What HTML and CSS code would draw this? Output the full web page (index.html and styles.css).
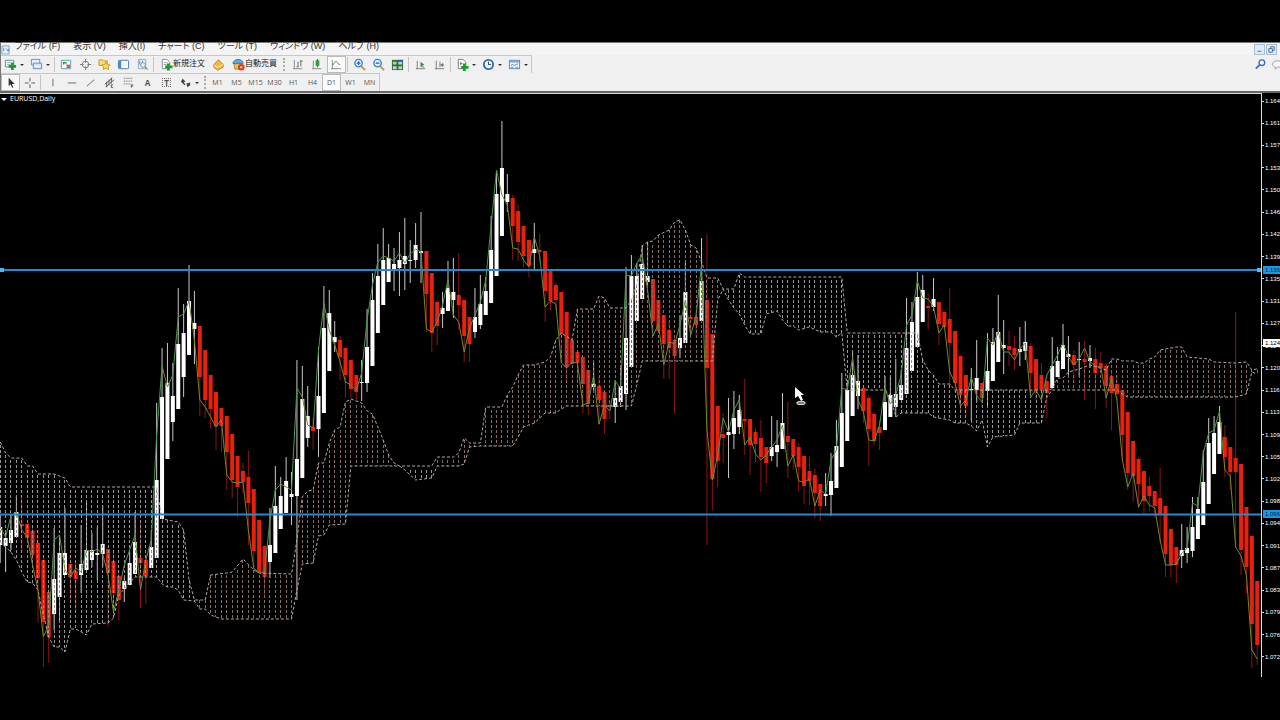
FILE: index.html
```
<!DOCTYPE html>
<html lang="ja">
<head>
    <meta charset="UTF-8" />
    <meta name="viewport" content="width=device-width, initial-scale=1.0"/>
    <title>EURUSD,Daily</title>
    <link rel="stylesheet" href="styles.css">
</head>
<body>
    <header class="toolbars">
        <nav class="menubar">
            <svg class="app-icon" viewBox="0 0 10 12"><path d="M1 2h8v9h-8z" fill="#e4f0fa" stroke="#7ba3c8"/><path d="M3 4v4M6 5l2 3 1-3" stroke="#4d86bd" fill="none"/></svg>
            <button class="menu">ファイル (F)</button>
            <button class="menu">表示 (V)</button>
            <button class="menu">挿入(I)</button>
            <button class="menu">チャート (C)</button>
            <button class="menu">ツール (T)</button>
            <button class="menu">ウィンドウ (W)</button>
            <button class="menu">ヘルプ (H)</button>
            <div class="window-controls">
                <button class="win" aria-label="最小化"><svg viewBox="0 0 10 10"><path d="M3 7h4" stroke="#4a6a8c"/></svg></button>
                <button class="win" aria-label="元に戻す"><svg viewBox="0 0 10 10"><path d="M4 4v-2h4v4h-2M2 4h4v4h-4z" fill="none" stroke="#4a6a8c"/></svg></button>
            </div>
        </nav>

        <div class="row">
            <div class="bar bar-main">
                <button class="tool" aria-label="新規チャート"><svg viewBox="0 0 14 14"><path d="M1.5 2.5h9v7h-9z" fill="#fff" stroke="#5f8a8f"/><path d="M3 5h6M3 7h4" stroke="#8fb6bb"/><path d="M9 5v8M5 9h8" stroke="#15a02c" stroke-width="3"/></svg></button>
                <button class="caret" aria-label="チャート一覧"></button>
                <button class="tool" aria-label="プロファイル"><svg viewBox="0 0 14 14"><path d="M1.5 1.5h9v6h-9z" fill="#e3effa" stroke="#5b8fc0"/><path d="M3.500 5.500h9v6h-9z" fill="#cfe3f5" stroke="#5b8fc0"/><path d="M5 9h6" stroke="#fff"/></svg></button>
                <button class="caret" aria-label="プロファイル一覧"></button>
                <span class="sep"></span>
                <button class="tool" aria-label="気配値"><svg viewBox="0 0 14 14"><path d="M1.500 2.500h10v9h-10z" fill="#f7fbff" stroke="#5c9fb8"/><path d="M3 5h3l1 1M4 4v3" stroke="#20a03a" stroke-width="1.500" fill="none"/><path d="M7 7l3 3M10 7v3h-3" stroke="#e0563a" stroke-width="1.500" fill="none"/></svg></button>
                <button class="tool" aria-label="データウィンドウ"><svg viewBox="0 0 14 14"><circle cx="7" cy="7" r="3.500" fill="none" stroke="#777"/><path d="M7 1v4M7 9v4M1 7h4M9 7h4" stroke="#777"/></svg></button>
                <button class="tool" aria-label="ナビゲーター"><svg viewBox="0 0 14 14"><path d="M1 2h4l1 1h4v5h-9z" fill="#f8dc79" stroke="#c79b2b"/><path d="M8.500 4l1.500 3 3 .5-2 2 .5 3-3-1.500-3 1.500.5-3-2-2 3-.5z" fill="#ffd84f" stroke="#c79b2b"/></svg></button>
                <button class="tool" aria-label="ターミナル"><svg viewBox="0 0 14 14"><rect x="1.500" y="2.500" width="11" height="9" rx="1" fill="#f5faff" stroke="#3f77ad"/><path d="M2 3h2.500v8h-2.500z" fill="#4d87be"/></svg></button>
                <button class="tool" aria-label="ストラテジーテスター"><svg viewBox="0 0 14 14"><path d="M2.500 1.500h8v10h-8z" fill="#dfeaf5" stroke="#8fabc8"/><path d="M4 3v4M7 3v3" stroke="#5d88b5"/><circle cx="7.500" cy="7.500" r="2.500" fill="#eef6fd" stroke="#7195bb"/><path d="M9.500 9.500l3 3" stroke="#a08e63" stroke-width="1.500"/></svg></button>
                <span class="sep"></span>
                <button class="tool tool-text"><svg viewBox="0 0 14 14"><path d="M2.500 1.500h5l3 3v7h-8z" fill="#fff" stroke="#7d8a94"/><path d="M4 5h4M4 7h3" stroke="#999"/><path d="M9 6v7.500M5.500 9.500h8" stroke="#15a02c" stroke-width="3"/></svg><span class="tool-label">新規注文</span></button>
                <button class="tool" aria-label="MetaEditor"><svg viewBox="0 0 14 14"><path d="M2 7l5-5 5 5v3l-6 3-4-3z" fill="#f0b93a" stroke="#b9801d"/><path d="M2 8l4 2 6-3" stroke="#fff1b8" fill="none"/></svg></button>
                <button class="tool tool-text"><svg viewBox="0 0 14 14"><path d="M2 6h9l-1 6h-7z" fill="#f0c24b" stroke="#b58a28"/><path d="M1 6c0-6 11-6 11 0z" fill="#5fa6dc" stroke="#3a7fb8"/><circle cx="10" cy="10" r="3.500" fill="#e03a22"/><path d="M9 9h2v2h-2z" fill="#fff"/></svg><span class="tool-label">自動売買</span></button>
                <span class="grip"></span>
                <button class="tool" aria-label="バーチャート"><svg viewBox="0 0 14 14"><path d="M2.500 2v10M1 11.500h10" stroke="#888" fill="none"/><path d="M6.500 4v6M5 9.500h1.500M9.500 2v7M9.500 3.500h2" stroke="#4f6d58" fill="none"/></svg></button>
                <button class="tool" aria-label="ローソク足"><svg viewBox="0 0 14 14"><path d="M2.500 3v9M1 11.500h10" stroke="#888" fill="none"/><path d="M7 1v9" stroke="#157c28"/><path d="M5 2.500h4v6h-4z" fill="#22a53c"/></svg></button>
                <button class="tool pressed" aria-label="ラインチャート"><svg viewBox="0 0 14 14"><path d="M2.500 2v10M1 11.500h11" stroke="#888" fill="none"/><path d="M3 8c2-5 4-5 5-3s2 2 3 2" stroke="#4f7f5c" fill="none"/></svg></button>
                <span class="sep"></span>
                <button class="tool" aria-label="ズームイン"><svg viewBox="0 0 14 14"><path d="M9 9l4 4" stroke="#c19a2c" stroke-width="2"/><circle cx="6" cy="5.500" r="4" fill="#e6f3ff" stroke="#3f83c9" stroke-width="1.500"/><path d="M4 5.500h4M6 3.500v4" stroke="#2668ad" stroke-width="1.500"/></svg></button>
                <button class="tool" aria-label="ズームアウト"><svg viewBox="0 0 14 14"><path d="M9 9l4 4" stroke="#c19a2c" stroke-width="2"/><circle cx="6" cy="5.500" r="4" fill="#e6f3ff" stroke="#3f83c9" stroke-width="1.500"/><path d="M4 5.500h4" stroke="#2668ad" stroke-width="1.500"/></svg></button>
                <button class="tool" aria-label="ウィンドウの整列"><svg viewBox="0 0 14 14"><path d="M1 2h12v11h-12z" fill="#356a3b"/><path d="M2 4h4v3h-4zM8 9h4v3h-4z" fill="#a7e07c"/><path d="M8 4h4v3h-4zM2 9h4v3h-4z" fill="#b5d2f5"/><path d="M7.500 2h5.500v1.500h-5.500z" fill="#2c5ca8"/></svg></button>
                <span class="sep"></span>
                <button class="tool" aria-label="自動スクロール"><svg viewBox="0 0 14 14"><path d="M3.500 3v9M2 11.500h10M8 9.500h3" stroke="#777" fill="none"/><path d="M7 4l4 3-4 3z" fill="#3c8c50"/></svg></button>
                <button class="tool" aria-label="チャートシフト"><svg viewBox="0 0 14 14"><path d="M3.500 3v9M2 11.500h10M7.500 4v6M8 7.500h4" stroke="#777" fill="none"/><path d="M11 5l-3 2.500 3 2.500z" fill="#777"/></svg></button>
                <span class="sep"></span>
                <button class="tool" aria-label="インディケータ"><svg viewBox="0 0 14 14"><path d="M2.500 1.500h5l3 3v7h-8z" fill="#fff" stroke="#777"/><path d="M5 4v4M4 6h3" stroke="#777"/><path d="M9 6v8M5.500 10h8" stroke="#15a02c" stroke-width="3"/></svg></button>
                <button class="caret" aria-label="インディケータ一覧"></button>
                <button class="tool" aria-label="時間足"><svg viewBox="0 0 14 14"><circle cx="7" cy="7" r="5" fill="#eef7ff" stroke="#2c6fb7" stroke-width="2"/><path d="M7 4v3h2.500" stroke="#333" fill="none"/></svg></button>
                <button class="caret" aria-label="時間足一覧"></button>
                <button class="tool" aria-label="定型チャート"><svg viewBox="0 0 14 14"><rect x="1.500" y="2.500" width="11" height="9" fill="#f3f9ff" stroke="#5486b7"/><path d="M2 4h10" stroke="#7fa9d1" stroke-width="2"/><path d="M3 8l2-1 2 1 4-2M3 10h3M8 10h3" stroke="#5d88a0" fill="none"/></svg></button>
                <button class="caret" aria-label="定型チャート一覧"></button>
            </div>
            <div class="right-tools">
                <button class="tool" aria-label="検索"><svg viewBox="0 0 14 14"><circle cx="8.500" cy="5" r="3" fill="#f5faff" stroke="#3a6fc4" stroke-width="1.500"/><path d="M6 7.500l-4 4" stroke="#3a6fc4" stroke-width="2"/></svg></button>
                <button class="tool chat" aria-label="チャット"><svg viewBox="0 0 14 14"><path d="M7 3c7 0 7 7 0 7l-2 2v-2c-5-1-4-7 2-7z" fill="#f8f8f8" stroke="#999"/></svg></button>
            </div>
        </div>

        <div class="row">
            <div class="bar bar-lines">
                <button class="tool pressed" aria-label="カーソル"><svg viewBox="0 0 14 14"><path d="M5 2v9l2-2 2 4 1-1-1.500-3.500h3z" fill="#333"/></svg></button>
                <button class="tool" aria-label="十字カーソル"><svg viewBox="0 0 14 14"><path d="M7.500 2v4M7.500 9v4M2 7.500h4M9 7.500h4" stroke="#555"/></svg></button>
                <span class="sep"></span>
                <button class="tool" aria-label="垂直線"><svg viewBox="0 0 14 14"><path d="M7.500 3v8" stroke="#666"/></svg></button>
                <button class="tool" aria-label="水平線"><svg viewBox="0 0 14 14"><path d="M3 7.500h9" stroke="#666"/></svg></button>
                <button class="tool" aria-label="トレンドライン"><svg viewBox="0 0 14 14"><path d="M3 11l8-7" stroke="#666"/></svg></button>
                <button class="tool" aria-label="チャネル"><svg viewBox="0 0 14 14"><path d="M2 9l8-7M3 12l9-8M4 6v6M6.500 4v6M9 2v6M11 9.500h-2v3h2" stroke="#555" fill="none"/></svg></button>
                <button class="tool" aria-label="フィボナッチ"><svg viewBox="0 0 14 14"><path d="M2 2.500h10M2 5.500h10M2 8.500h7" stroke="#555" stroke-dasharray="1 1"/><path d="M10 12.500v-3h2M10 11h2" stroke="#555" fill="none"/></svg></button>
                <button class="tool letter">A</button>
                <button class="tool letter"><span class="boxed">T</span></button>
                <button class="tool" aria-label="矢印"><svg viewBox="0 0 14 14"><path d="M2 6l2-3 3 3-2 1 2 2-1 1-3-3zM8 8l4-1v3l-3 2z" fill="#444"/></svg></button>
                <button class="caret" aria-label="矢印一覧"></button>
                <span class="grip"></span>
                <button class="tool period">M1</button>
                <button class="tool period">M5</button>
                <button class="tool period">M15</button>
                <button class="tool period">M30</button>
                <button class="tool period">H1</button>
                <button class="tool period">H4</button>
                <button class="tool period pressed">D1</button>
                <button class="tool period">W1</button>
                <button class="tool period">MN</button>
            </div>
        </div>
    </header>

    <main class="chart">
        <div class="plot">
            <svg id="plot" viewBox="0 94 1261 583" preserveAspectRatio="none"></svg>
            <h1 class="symbol">EURUSD,Daily</h1>
            <svg class="pointer" viewBox="0 0 14 20"><path d="M1 1v11l3-2 3 5 2-1-2-5h3z" fill="#fff"/><path d="M2 17l2-2h6l2 2-2 2h-6z" fill="#ccc"/><path d="M4 17h6" stroke="#333"/></svg>
        </div>
        <div class="axis">
            <ul class="prices" id="prices"></ul>
            <span class="tag tag-upper">1.136</span>
            <span class="tag tag-current">1.124</span>
            <span class="tag tag-lower">1.096</span>
        </div>
    </main>

    <script src="chart.js"></script>
</body>
</html>
```
FILE: styles.css
```
* {
    box-sizing: border-box;
}
body {
    display: flex;
    flex-direction: column;
    height: 100vh;
    margin: 0;
    padding: 42px 0 43px;
    overflow: hidden;
    background-color: #000;
    color: #fff;
    font-family: "Open Sans", "Noto Sans CJK JP", sans-serif;
}
button {
    margin: 0;
    padding: 0;
    border: none;
    background: none;
    color: #333;
    font-family: inherit;
    cursor: pointer;
}
.toolbars {
    background-color: #f0f0f0;
    border-top: 1px solid #777;
    border-left: 1px solid #777;
    border-bottom: 2px solid #666;
}
.menubar {
    display: flex;
    align-items: center;
    gap: 13px;
    height: 12px;
    background-color: #f4f4f4;
}
.app-icon {
    width: 9px;
    height: 11px;
    margin-right: -8px;
}
.menu {
    font-family: "Liberation Sans", "Noto Sans CJK JP", sans-serif;
    font-feature-settings: "palt";
    font-size: 9px;
    line-height: 9px;
    white-space: nowrap;
    margin-top: -5px;
}
.window-controls {
    display: flex;
    gap: 1px;
    margin-left: auto;
    margin-right: 3px;
}
.win {
    width: 11px;
    height: 11px;
    border: 1px solid #a9bfd6;
    background-color: #dce9f6;
}
.win svg {
    display: block;
    width: 9px;
    height: 9px;
}
.row {
    display: flex;
    justify-content: space-between;
    height: 18px;
}
.bar {
    display: flex;
    align-items: center;
    border: solid #c8c8c8;
    border-width: 1px 1px 0 0;
}
.tool {
    display: flex;
    align-items: center;
    justify-content: center;
    flex: none;
    width: 19px;
    height: 17px;
}
.tool svg {
    flex: none;
    width: 13px;
    height: 13px;
}
.tool-text {
    width: auto;
    padding: 0 4px;
    font-size: 8px;
    line-height: 12px;
    color: #222;
    white-space: nowrap;
}
.tool-label {
    padding-bottom: 4px;
}
.pressed {
    border: 1px solid #bbb;
    background-color: #fafafa;
}
.letter {
    font-size: 8px;
    font-weight: bold;
    color: #555;
}
.boxed {
    border: 1px dotted #777;
    padding: 0 1px;
    line-height: 7px;
}
.period {
    font-size: 7px;
    color: #555;
}
.caret {
    flex: none;
    width: 7px;
}
.caret::after {
    content: "";
    display: block;
    width: 0;
    border: 2px solid transparent;
    border-top-color: #333;
    border-bottom: none;
}
.sep {
    flex: none;
    width: 1px;
    height: 15px;
    margin: 0 2px 0 1px;
    background-color: #c4c4c4;
}
.grip {
    flex: none;
    width: 3px;
    height: 13px;
    margin: 0 1px 0 2px;
    border-left: 2px dotted #aaa;
}
.bar-main .grip {
    margin: 0 3px 0 2px;
}
.right-tools {
    display: flex;
    align-items: center;
    margin-right: -5px;
}
.chat {
    width: 15px;
}
.chart {
    display: flex;
    flex: 1;
    min-height: 0;
}
.plot {
    position: relative;
    flex: 1;
    border-top: 1px solid #ddd;
    border-right: 1px solid #ddd;
}
#plot {
    display: block;
    position: absolute;
    width: 100%;
    height: 100%;
}
.symbol {
    position: absolute;
    top: 0;
    left: 1px;
    display: flex;
    align-items: center;
    gap: 3px;
    margin: 0;
    font-size: 7px;
    font-weight: normal;
    line-height: 10px;
}
.symbol::before {
    content: "";
    border: 3px solid transparent;
    border-top-color: #fff;
    border-bottom: none;
}
.pointer {
    position: absolute;
    left: 63%;
    top: 50%;
    width: 14px;
    height: 20px;
}
.axis {
    position: relative;
    width: 18px;
    overflow: hidden;
    font-family: "Liberation Sans", sans-serif;
    font-size: 6px;
    line-height: 8px;
}
.prices {
    display: flex;
    flex-direction: column;
    justify-content: space-between;
    height: 100%;
    margin: 0;
    padding: 4px 0 16px;
    list-style: none;
}
.prices li {
    display: flex;
    align-items: center;
    gap: 1px;
}
.prices li::before {
    content: "";
    flex: none;
    width: 2px;
    height: 1px;
    background-color: #ddd;
}
.tag {
    position: absolute;
    left: 1px;
    right: 0;
    padding-left: 2px;
    background-color: #1f96e0;
    color: #04223a;
}
.tag-upper {
    top: 173px;
}
.tag-current {
    top: 246px;
    background-color: #fff;
    color: #000;
}
.tag-lower {
    top: 417px;
}
.candle-up {
    fill: #fff;
}
.candle-down {
    fill: #e8200e;
}
.wick-up {
    stroke: #c8c8c8;
}
.wick-down {
    stroke: #8c1515;
}
.close-line {
    fill: none;
    stroke: #4c9a50;
}
.close-fall {
    stroke: #6f8a2c;
}
.cloud {
    fill: none;
    stroke: #b5a6a6;
    stroke-dasharray: 3 2;
}
.hatch-light {
    stroke: #9a9397;
    stroke-dasharray: 3 2;
}
.hatch-warm {
    stroke: #876c66;
    stroke-dasharray: 3 2;
}
.level {
    stroke: #2389d2;
    stroke-width: 2;
}
.handle {
    fill: #4fb4f5;
}
```
FILE: chart.js
```
const STEP = 5.395;
const x = i => i * STEP + 0.2;

// direction, high, body top, body bottom, low
const candles = `
w 515 527 545 563,w 532 538 546 572,w 516 530 543 550,w 496 512 537 537,r 498 524 526 552,r 524 524 538 538,r 528 531 555 562,r 530 543 578 623,r 555 560 622 667,r 587 592 637 663,
w 528 579 614 630,w 535 553 597 620,w 508 553 575 575,r 557 564 577 602,r 563 571 579 610,w 525 564 575 593,w 500 550 570 572,w 533 550 560 567,w 527 553 555 580,w 505 544 554 567,
r 549 549 573 627,r 552 561 593 617,r 570 576 600 620,w 577 581 589 602,w 552 563 585 585,w 512 542 574 574,r 523 558 563 608,r 553 560 576 604,w 530 547 568 568,w 403 480 558 558,
w 348 397 519 519,w 343 383 459 459,w 363 396 422 441,w 288 344 409 409,w 304 333 377 397,w 265 301 355 355,w 291 323 329 364,r 326 326 377 416,r 350 350 400 418,r 375 375 409 428,
r 392 392 426 450,r 408 408 426 452,r 416 416 452 490,r 434 434 480 498,r 456 456 487 517,r 463 471 482 493,r 451 477 503 545,r 489 489 551 572,r 520 520 573 573,r 546 546 577 597,
w 508 545 562 578,w 466 506 553 553,w 477 496 529 529,w 457 481 513 513,w 472 494 497 525,w 360 459 496 600,w 366 399 478 478,w 386 416 438 447,r 418 427 431 450,w 347 396 429 457,
w 286 328 413 413,w 290 313 371 371,w 321 337 342 352,r 336 340 357 380,r 348 348 375 397,r 360 360 389 398,r 375 375 392 400,w 360 382 383 401,w 309 347 383 392,w 273 300 366 366,
w 244 276 333 333,w 228 260 305 305,w 244 258 282 282,w 248 264 270 291,w 232 260 268 296,w 218 256 264 290,w 240 260 261 283,w 223 245 260 268,w 212 251 253 283,r 251 251 294 332,
r 273 273 333 352,r 300 302 326 345,w 292 308 314 328,w 261 288 311 311,w 258 292 300 318,r 253 295 305 330,r 300 300 336 362,r 317 317 344 362,w 288 317 332 338,w 275 304 325 329,
w 277 291 315 315,w 216 250 303 303,w 170 194 276 276,w 121 168 236 236,w 174 194 202 212,r 195 198 226 260,r 204 211 242 261,r 226 226 256 267,r 240 240 266 277,w 223 249 253 269,
r 234 250 252 262,r 251 251 291 322,r 271 271 301 310,r 283 285 300 310,r 292 292 334 363,r 312 312 367 380,r 335 340 364 364,r 350 352 363 382,r 357 357 384 413,r 370 370 404 415,
w 361 384 387 393,r 377 386 400 425,r 392 392 419 434,r 402 405 407 419,w 380 398 407 423,w 365 386 402 407,w 267 338 394 410,w 255 276 367 367,w 263 276 321 321,w 245 264 299 299,
w 242 276 282 285,r 279 279 321 330,r 300 300 331 331,r 315 315 344 379,r 322 330 348 379,r 338 340 356 414,w 315 338 348 358,w 262 292 343 343,r 290 317 319 330,r 310 317 325 337,
w 238 281 321 321,r 234 300 368 545,r 334 334 479 510,r 406 406 461 487,r 413 434 438 463,w 398 432 435 478,w 391 418 434 449,w 395 410 427 434,r 379 419 421 455,r 419 419 445 475,
r 428 432 444 462,r 420 438 457 492,r 447 447 463 483,w 416 447 456 461,w 420 445 452 467,w 393 423 449 449,r 402 436 442 478,r 439 439 456 470,r 443 447 467 492,r 456 456 486 504,
r 456 471 481 505,r 468 475 493 518,r 484 484 506 521,w 473 494 496 506,w 453 481 495 516,w 420 446 488 488,w 373 413 467 467,w 382 390 441 441,w 351 375 416 416,w 355 381 396 409,
r 388 388 411 423,r 395 398 429 466,r 414 414 441 445,r 420 427 433 450,w 376 402 430 430,w 375 395 417 417,w 359 394 407 417,w 370 385 400 400,w 298 348 394 394,w 302 322 371 371,
w 272 297 347 347,w 275 290 322 322,r 293 306 308 329,w 278 299 307 311,r 302 302 324 345,r 312 312 327 329,r 288 319 343 385,r 331 331 383 392,r 356 356 395 412,r 375 375 406 417,
w 368 389 390 420,w 340 378 390 402,r 382 383 398 407,w 333 371 391 408,w 328 342 381 381,w 295 332 362 362,w 320 345 348 374,r 331 346 350 366,r 336 348 355 370,w 327 349 352 366,
w 321 342 351 360,r 343 346 373 393,r 359 359 391 400,r 363 375 389 402,r 375 381 393 418,w 337 366 388 388,w 347 361 377 377,w 324 345 369 369,w 336 354 357 377,r 350 355 365 383,
w 342 359 360 377,r 341 359 362 400,w 345 358 361 368,r 348 359 373 409,r 352 363 368 369,r 364 366 386 408,r 370 376 393 430,r 375 384 394 400,r 390 390 435 460,r 412 412 473 490,
r 441 441 476 502,r 457 459 484 508,r 471 471 501 513,r 477 486 496 511,r 491 491 506 518,r 468 498 514 543,r 506 506 554 577,r 529 529 565 577,r 547 547 565 583,w 524 550 556 568,
w 527 548 553 563,w 497 527 551 557,w 497 509 539 539,w 450 482 525 525,w 418 443 504 504,w 416 433 474 474,w 406 422 454 454,r 425 437 457 477,r 447 447 472 490,r 312 458 472 547,
r 464 464 550 575,r 507 507 567 593,r 536 536 624 668,r 581 581 645 665`.trim().split(/,\s*/).map(c => c.split(' '));

const closes = [
    527, 537, 516, 512, 530, 537, 565, 590, 637, 625, 540, 535, 570, 577, 568, 572, 550, 552, 549, 554,
    575, 612, 590, 565, 550, 535, 590, 560, 540, 435, 366, 387, 375, 317, 314, 301, 340, 400, 407, 417,
    427, 420, 475, 482, 483, 482, 530, 568, 573, 572, 520, 490, 484, 487, 490, 388, 397, 425, 428, 350,
    303, 330, 345, 362, 382, 385, 390, 373, 320, 285, 262, 256, 258, 261, 253, 263, 254, 249, 252, 329,
    332, 322, 305, 280, 315, 322, 352, 328, 315, 302, 280, 225, 170, 195, 205, 248, 249, 260, 267, 237,
    256, 307, 301, 304, 363, 368, 362, 363, 405, 403, 375, 424, 405, 411, 381, 388, 275, 276, 263, 255,
    290, 336, 324, 365, 342, 344, 325, 300, 335, 315, 264, 430, 480, 455, 418, 432, 410, 400, 445, 437,
    454, 460, 455, 447, 440, 425, 466, 455, 481, 482, 479, 506, 490, 494, 460, 450, 388, 390, 358, 400,
    412, 440, 441, 425, 388, 404, 395, 375, 325, 315, 281, 298, 299, 307, 333, 325, 372, 383, 406, 400,
    377, 396, 402, 338, 345, 332, 352, 352, 360, 349, 343, 397, 390, 400, 375, 365, 355, 343, 357, 365,
    359, 348, 362, 366, 367, 398, 378, 400, 460, 487, 473, 507, 496, 505, 508, 540, 565, 565, 564, 553,
    548, 503, 506, 453, 433, 430, 411, 470, 476, 547, 556, 575, 650, 659
];

// edges of the cloud as [bar, y] corners
const upper = [
    [0, 442], [1, 453], [2, 458], [4, 458], [5, 466], [6, 466], [7, 474], [10, 474], [12, 478], [13, 487], [29, 487],
    [30, 519], [33, 522], [34, 530], [35, 580], [36, 600], [38, 600], [39, 575], [42, 573], [43, 572], [45, 559], [47, 570], [48, 573], [54, 574],
    [55, 540], [56, 497], [57, 491], [58, 490], [59, 463], [60, 463], [61, 443], [62, 430], [63, 427], [64, 402], [65, 399],
    [67, 403], [68, 411], [69, 414], [70, 427], [71, 440], [72, 455], [73, 463], [74, 466], [80, 466], [81, 457], [84, 457],
    [85, 453], [86, 438], [87, 443], [89, 443], [90, 407], [93, 407], [94, 395], [95, 387], [96, 375], [97, 365], [99, 365],
    [101, 362], [102, 357], [103, 340], [104, 333], [106, 340], [107, 309], [110, 309], [111, 296], [112, 298], [113, 308], [116, 308],
    [117, 300], [118, 285], [119, 246], [120, 242], [121, 241], [122, 235], [124, 230], [125, 222], [126, 220], [127, 230],
    [128, 245], [129, 248], [130, 262], [131, 278], [133, 278], [134, 289], [136, 289], [137, 273], [138, 277], [156, 277],
    [157, 333], [170, 333], [171, 360], [172, 370], [173, 375], [174, 384], [176, 384], [177, 390], [194, 390], [195, 389], [196, 378],
    [197, 378], [198, 372], [200, 369], [202, 365], [205, 370], [206, 359], [207, 359], [208, 361], [210, 361], [211, 363],
    [212, 363], [213, 359], [214, 357], [215, 350], [216, 349], [218, 347], [219, 347], [220, 357], [224, 359], [225, 362],
    [229, 363], [231, 362], [232, 370], [233, 369]
];
const lower = [
    [0, 542], [2, 552], [3, 560], [4, 572], [5, 582], [6, 583], [7, 590], [8, 615], [9, 637], [10, 647], [11, 647], [12, 652],
    [13, 629], [14, 629], [15, 632], [16, 635], [17, 624], [20, 623], [21, 618], [22, 595], [25, 577], [29, 577], [30, 584],
    [31, 587], [32, 587], [33, 590], [34, 600], [36, 601], [37, 609], [38, 609], [39, 615], [41, 619], [54, 619], [55, 590],
    [56, 564], [58, 563], [59, 536], [60, 535], [61, 525], [64, 524], [65, 466], [74, 466], [75, 470], [76, 475], [77, 480],
    [80, 478], [81, 466], [85, 466], [86, 464], [87, 447], [89, 446], [95, 446], [96, 437], [97, 427], [99, 423], [101, 413],
    [103, 413], [104, 409], [105, 406], [117, 406], [118, 385], [119, 361], [132, 361], [133, 300], [134, 289], [135, 300],
    [136, 308], [137, 314], [138, 325], [139, 334], [141, 334], [142, 314], [144, 311], [145, 320], [146, 326], [147, 326],
    [148, 330], [150, 327], [152, 332], [154, 332], [155, 337], [156, 333], [157, 390], [164, 390], [165, 395], [166, 417],
    [167, 413], [172, 413], [173, 417], [176, 420], [177, 423], [179, 423], [180, 426], [181, 431], [182, 420], [183, 447],
    [184, 437], [188, 435], [189, 423], [193, 423], [194, 397], [195, 390], [207, 390], [208, 394], [209, 397], [229, 397],
    [231, 394], [232, 372], [233, 374]
];
// bars where the cloud is drawn in the warmer colour
const warm = [[37, 74], [81, 133], [196, 233]];

function valueAt(points, i) {
    for (let k = 1; k < points.length; k++) {
        const [x0, y0] = points[k - 1];
        const [x1, y1] = points[k];
        if (i <= x1) return y0 + (y1 - y0) * (i - x0) / (x1 - x0);
    }
}

function line(cls, x1, y1, x2, y2) {
    return `<line class="${cls}" x1="${x1}" y1="${y1}" x2="${x2}" y2="${y2}"/>`;
}

function outline(points) {
    return `<polyline class="cloud" points="${points.map(([i, y]) => x(i) + ',' + y).join(' ')}"/>`;
}

let svg = '';
candles.forEach(([dir, high, top, bottom, low], i) => {
    const kind = dir === 'w' ? 'up' : 'down';
    svg += line('wick-' + kind, x(i), high, x(i), low);
    svg += `<rect class="candle-${kind}" x="${x(i) - 2}" y="${top}" width="4" height="${Math.max(bottom - top, 1)}"/>`;
});
for (let i = 0; i < closes.length; i++) {
    const kind = warm.some(([a, b]) => i >= a && i <= b) ? 'hatch-warm' : 'hatch-light';
    // start on a multiple of the dash length so the dashes form rows
    const top = Math.ceil(valueAt(upper, i) / 5) * 5;
    const bottom = valueAt(lower, i);
    const mid = Math.floor(x(i)) + 0.5;
    if (bottom > top) svg += line(kind, mid, top, mid, bottom);
}
svg += outline(upper) + outline(lower);
for (let i = 1; i < closes.length; i++) {
    const fall = closes[i] > closes[i - 1] ? ' close-fall' : '';
    svg += line('close-line' + fall, x(i - 1), closes[i - 1], x(i), closes[i]);
}
[270, 514.5].forEach(y => {
    svg += line('level', 0, y, 1261, y);
});
svg += '<rect class="handle" x="0" y="268" width="4" height="4"/><rect class="handle" x="1257" y="268" width="4" height="4"/>';
document.getElementById('plot').innerHTML = svg;

const prices = ['1.164', '1.161', '1.157', '1.153', '1.150', '1.146', '1.142', '1.139', '1.135', '1.131', '1.127', '1.124', '1.120',
    '1.116', '1.113', '1.109', '1.105', '1.102', '1.098', '1.094', '1.091', '1.087', '1.083', '1.079', '1.076', '1.072'];
document.getElementById('prices').innerHTML = prices.map(p => `<li>${p}</li>`).join('');
```
